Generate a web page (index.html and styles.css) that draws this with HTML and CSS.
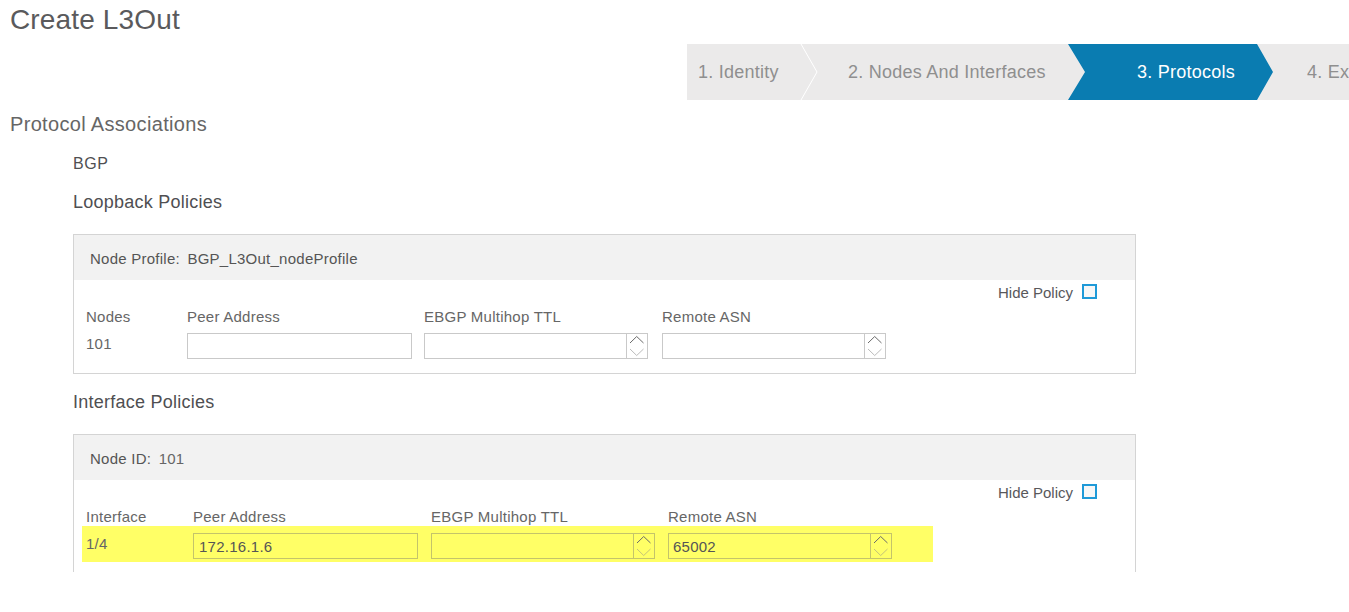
FILE: index.html
```html
<!DOCTYPE html>
<html lang="en">
<head>
    <meta charset="UTF-8">
    <meta name="viewport" content="width=device-width, initial-scale=1.0">
    <title>Create L3Out</title>
    <link rel="stylesheet" href="styles.css">
</head>
<body>

<h1 class="page-title">Create L3Out</h1>

<div class="wizard">
    <div class="step step-first">1. Identity</div>
    <svg class="step-sep" width="18" height="56" viewBox="0 0 18 56">
        <polyline points="1,0 17,28 1,56" fill="none" stroke="#ffffff" stroke-width="1"/>
    </svg>
    <div class="step step-second">2. Nodes And Interfaces</div>
    <div class="step step-active">3. Protocols</div>
    <div class="step step-next">4. External EPG Networks</div>
</div>

<h2 class="section-title">Protocol Associations</h2>

<div class="protocol">
    <div class="protocol-name">BGP</div>

    <h3 class="group-title">Loopback Policies</h3>
    <div class="panel">
        <div class="panel-head">
            <span class="head-label">Node Profile:</span>
            <span class="head-value">BGP_L3Out_nodeProfile</span>
        </div>
        <div class="panel-body">
            <div class="hide-row">
                <label>Hide Policy</label>
                <span class="checkbox"></span>
            </div>
            <div class="grid-row labels loopback-cols">
                <div>Nodes</div>
                <div>Peer Address</div>
                <div>EBGP Multihop TTL</div>
                <div>Remote ASN</div>
            </div>
            <div class="grid-row fields loopback-cols">
                <div class="value">101</div>
                <div><input class="text-field" type="text"></div>
                <div>
                    <div class="num-field">
                        <input type="text">
                        <span class="spin">
                            <svg width="20" height="24" viewBox="0 0 20 24">
                                <polyline class="spin-up" points="3,9 9.7,2.5 16.5,9" fill="none"/>
                                <polyline class="spin-down" points="3,15 9.7,21.5 16.5,15" fill="none"/>
                            </svg>
                        </span>
                    </div>
                </div>
                <div>
                    <div class="num-field">
                        <input type="text">
                        <span class="spin">
                            <svg width="20" height="24" viewBox="0 0 20 24">
                                <polyline class="spin-up" points="3,9 9.7,2.5 16.5,9" fill="none"/>
                                <polyline class="spin-down" points="3,15 9.7,21.5 16.5,15" fill="none"/>
                            </svg>
                        </span>
                    </div>
                </div>
            </div>
        </div>
    </div>

    <h3 class="group-title">Interface Policies</h3>
    <div class="panel panel-open">
        <div class="panel-head">
            <span class="head-label">Node ID:</span>
            <span class="head-value light">101</span>
        </div>
        <div class="panel-body">
            <div class="hide-row">
                <label>Hide Policy</label>
                <span class="checkbox"></span>
            </div>
            <div class="grid-row labels interface-cols">
                <div>Interface</div>
                <div>Peer Address</div>
                <div>EBGP Multihop TTL</div>
                <div>Remote ASN</div>
            </div>
            <div class="grid-row fields interface-cols highlight">
                <div class="value">1/4</div>
                <div><input class="text-field" type="text" value="172.16.1.6"></div>
                <div>
                    <div class="num-field">
                        <input type="text">
                        <span class="spin">
                            <svg width="20" height="24" viewBox="0 0 20 24">
                                <polyline class="spin-up" points="3,9 9.7,2.5 16.5,9" fill="none"/>
                                <polyline class="spin-down" points="3,15 9.7,21.5 16.5,15" fill="none"/>
                            </svg>
                        </span>
                    </div>
                </div>
                <div>
                    <div class="num-field">
                        <input type="text" value="65002">
                        <span class="spin">
                            <svg width="20" height="24" viewBox="0 0 20 24">
                                <polyline class="spin-up" points="3,9 9.7,2.5 16.5,9" fill="none"/>
                                <polyline class="spin-down" points="3,15 9.7,21.5 16.5,15" fill="none"/>
                            </svg>
                        </span>
                    </div>
                </div>
            </div>
        </div>
    </div>
</div>

</body>
</html>
```

FILE: styles.css
```css
body {
    margin: 0;
    font-family: "Liberation Sans", Arial, sans-serif;
    letter-spacing: 0.25px;
    color: #58585b;
    background: #ffffff;
}
.page-title {
    margin: 4px 0 0 0;
    padding-left: 10px;
    font-size: 28px;
    line-height: 32px;
    font-weight: normal;
    letter-spacing: 0.15px;
    color: #5a5a5c;
}

/* wizard steps */
.wizard {
    display: flex;
    margin: 8px 0 0 687px;
    height: 56px;
    background-color: #ebeaea;
    overflow: hidden;
    white-space: nowrap;
}
.step {
    flex: 0 0 auto;
    box-sizing: border-box;
    font-size: 18px;
    line-height: 56px;
    color: #8f8f8f;
}
.step-first {
    width: 113px;
    padding-left: 11px;
}
.step-sep {
    flex: 0 0 18px;
}
.step-second {
    width: 250px;
    padding-left: 30px;
}
.step-active {
    width: 205px;
    padding-left: 69px;
    color: #ffffff;
    background-color: #0a7cb1;
    clip-path: polygon(0 0, 189px 0, 100% 50%, 189px 100%, 0 100%, 17px 50%);
}
.step-next {
    padding-left: 34px;
}

.section-title {
    margin: 12px 0 0 0;
    padding-left: 10px;
    font-size: 20px;
    line-height: 24px;
    font-weight: normal;
    letter-spacing: 0.33px;
    color: #666666;
}

.protocol {
    margin-left: 73px;
    width: 1063px;
}
.protocol-name {
    margin-top: 18px;
    font-size: 16px;
    line-height: 20px;
    letter-spacing: 0.6px;
    color: #4f4f52;
}
.group-title {
    margin: 17px 0 21px 0;
    font-size: 18px;
    line-height: 22px;
    font-weight: normal;
    color: #4f4f52;
}

/* panels */
.panel {
    border: 1px solid #d4d4d4;
}
.panel-open {
    border-bottom: none;
}
.panel-head {
    padding: 4px 0 1px 16px;
    line-height: 40px;
    font-size: 15px;
    background-color: #f2f2f2;
    color: #555555;
}
.head-label {
    margin-right: 3px;
}
.head-value.light {
    color: #666666;
}
.panel-body {
    padding: 3px 38px 11px 12px;
    font-size: 15px;
}
.panel-open .panel-body {
    padding-bottom: 10px;
}
.hide-row {
    display: flex;
    justify-content: flex-end;
    align-items: center;
    height: 18px;
    color: #58585b;
}
.hide-row label {
    letter-spacing: 0;
}
.checkbox {
    box-sizing: border-box;
    width: 15px;
    height: 15px;
    margin: -2px 0 0 9px;
    border: 2px solid #1f9ad8;
    background-color: #f7f7f7;
}

.grid-row {
    display: grid;
}
.loopback-cols {
    grid-template-columns: 101px 237px 238px 238px;
}
.interface-cols {
    grid-template-columns: 107px 238px 237px 238px;
}
.labels {
    margin-top: 7px;
    line-height: 18px;
    color: #666666;
}
.fields {
    padding: 7px 0 3px 0;
}
.value {
    line-height: 22px;
    color: #666666;
}
.highlight {
    box-sizing: border-box;
    width: 851px;
    margin-left: -4px;
    padding-left: 4px;
    background-color: #ffff66;
}

.text-field,
.num-field input {
    box-sizing: border-box;
    font-family: "Liberation Sans", Arial, sans-serif;
    font-size: 15px;
    letter-spacing: 0.25px;
    color: #555555;
    outline: none;
}
.text-field {
    width: 225px;
    height: 26px;
    margin: 0;
    padding: 0 5px;
    border: 1px solid #c9c9c9;
    background: transparent;
}
.num-field {
    box-sizing: border-box;
    display: flex;
    width: 224px;
    height: 26px;
    border: 1px solid #c9c9c9;
}
.num-field input {
    flex: 1;
    min-width: 0;
    height: 24px;
    margin: 0;
    padding: 0 4px;
    border: none;
    background: transparent;
}
.spin {
    width: 20px;
    height: 24px;
    border-left: 1px solid #c9c9c9;
}
.spin svg {
    display: block;
}
.spin-up {
    stroke: #6a6a6a;
    stroke-width: 1;
}
.spin-down {
    stroke: #bcbcbc;
    stroke-width: 1;
}
.highlight .text-field,
.highlight .num-field,
.highlight .spin {
    border-color: #c4c46a;
}
.highlight .spin-down {
    stroke: #c4c47a;
}
```
